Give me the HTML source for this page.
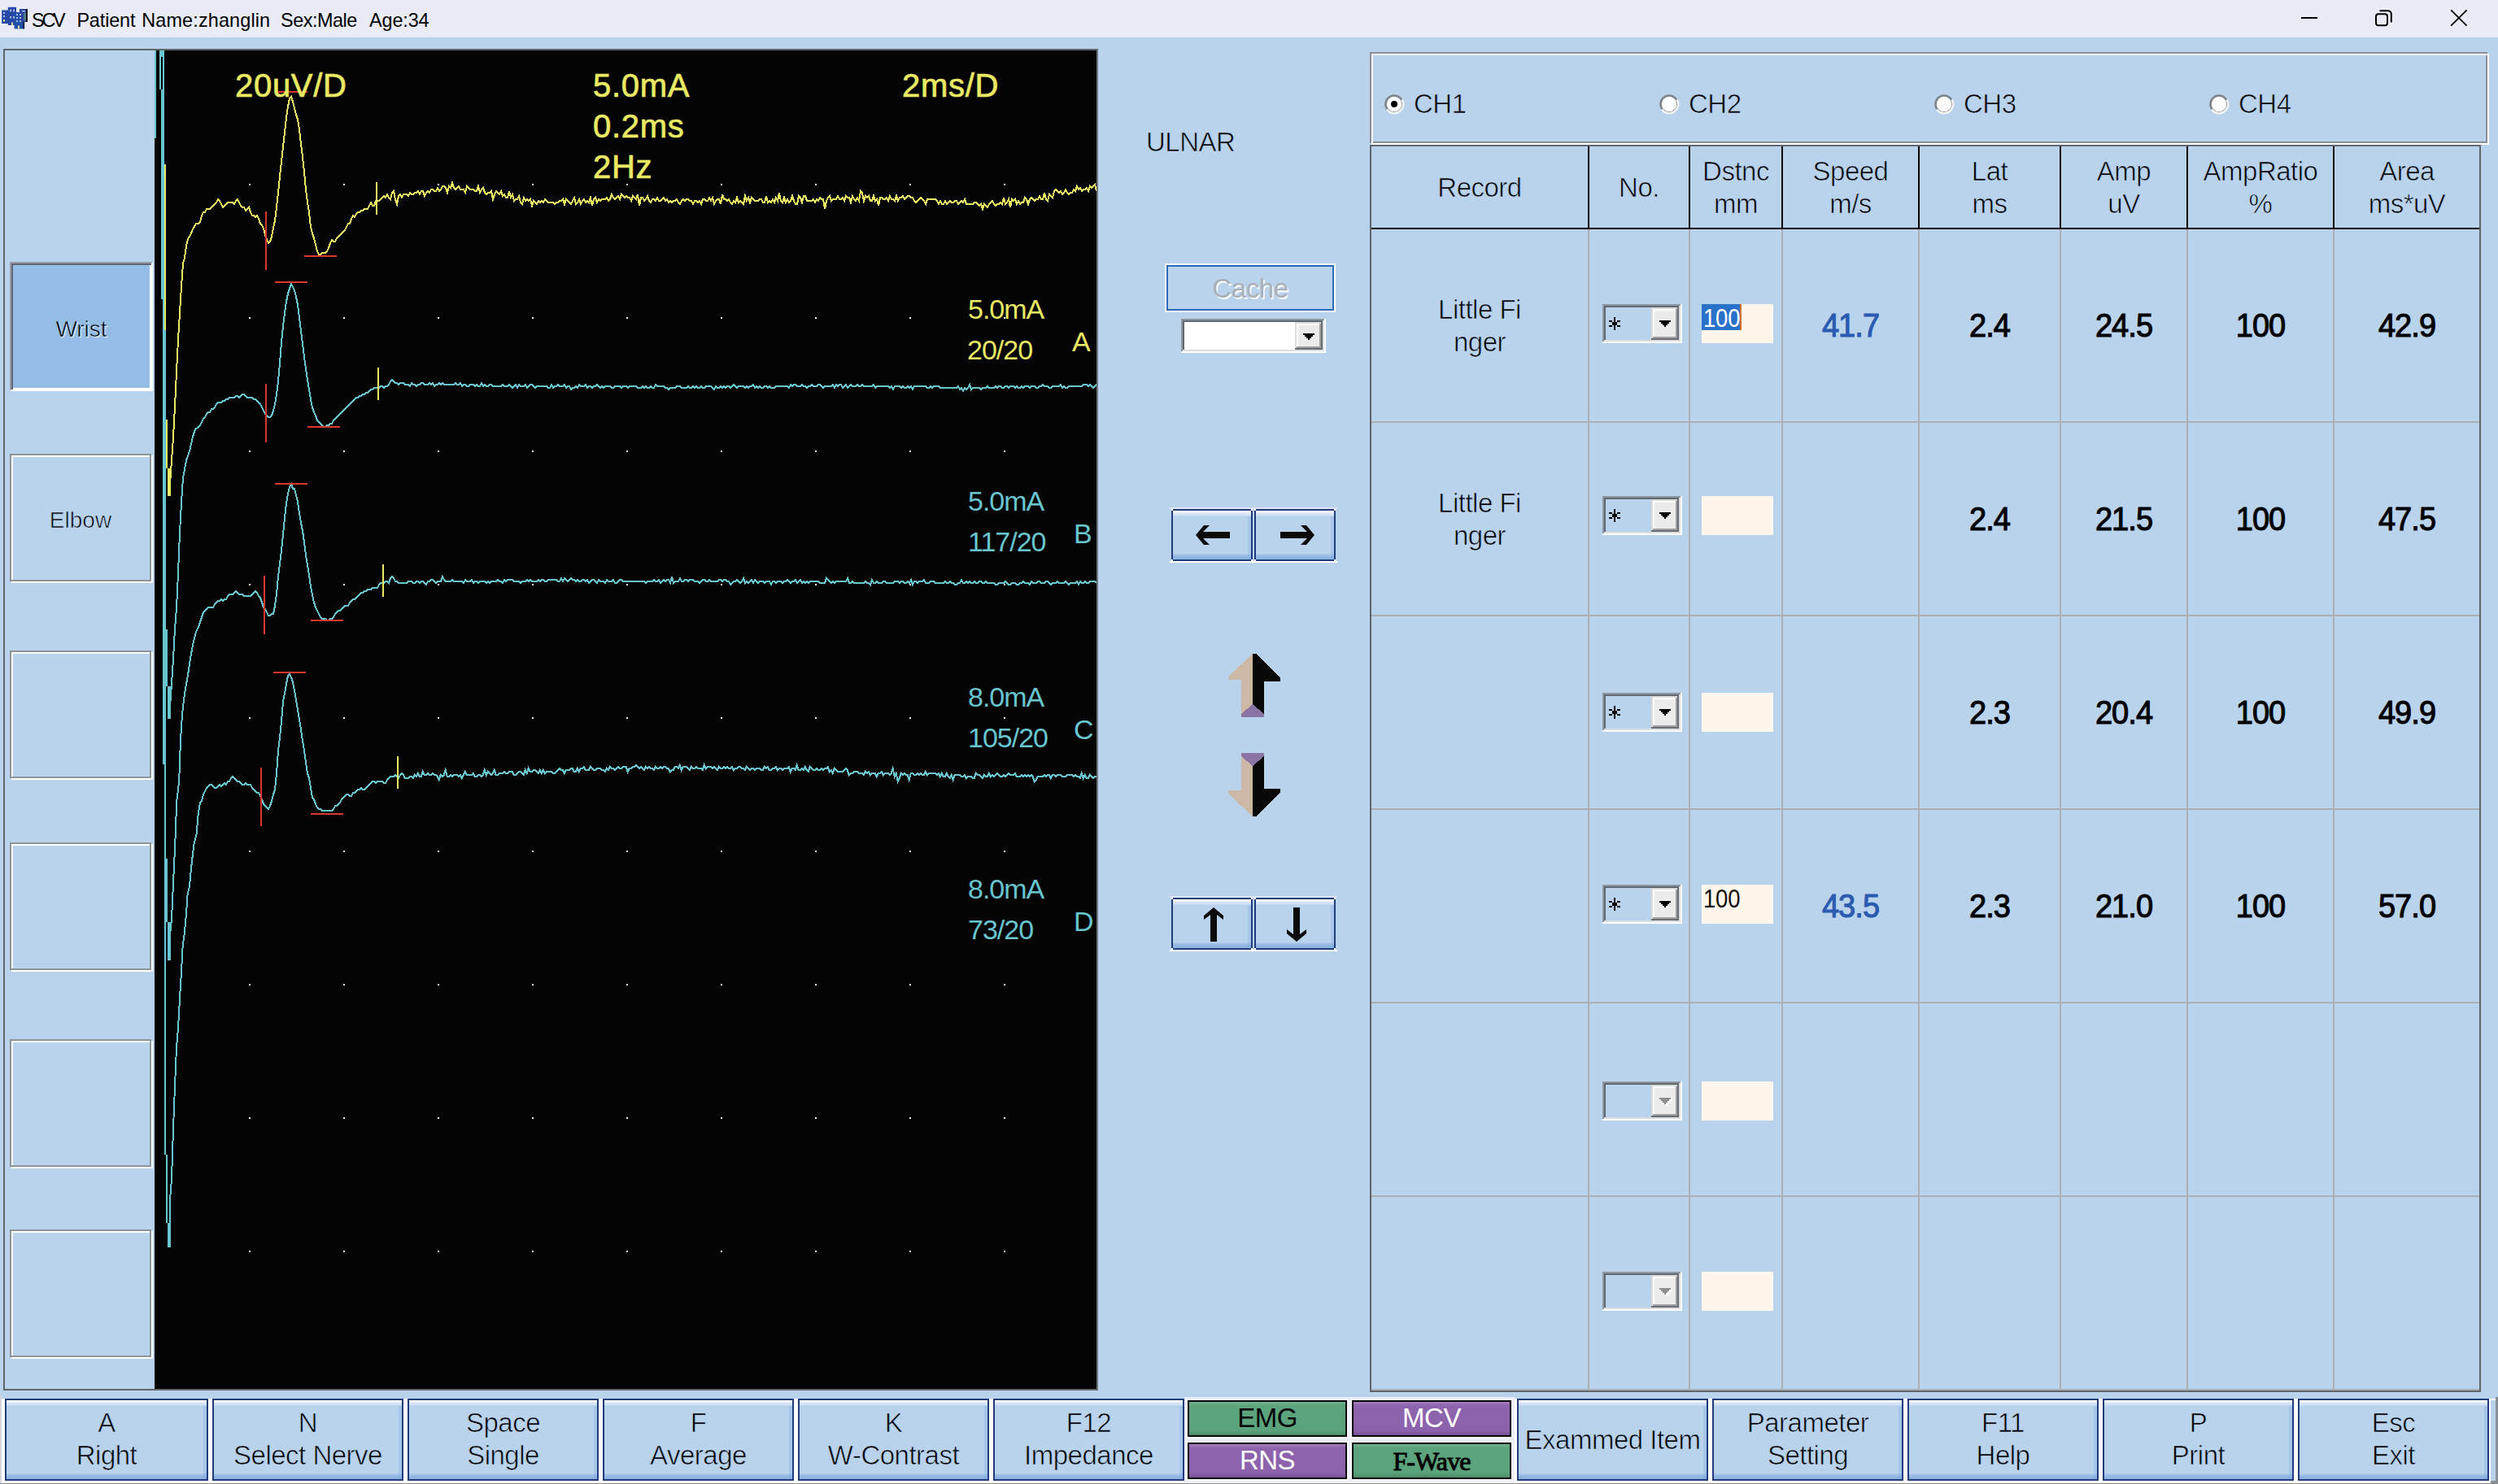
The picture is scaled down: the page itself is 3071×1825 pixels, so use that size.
<!DOCTYPE html>
<html><head><meta charset="utf-8"><title>SCV</title><style>
*{margin:0;padding:0;box-sizing:border-box}
html,body{width:3071px;height:1825px;overflow:hidden}
body{background:#b9d3ec;font-family:"Liberation Sans",sans-serif;color:#000;position:relative;font-size:32px;-webkit-text-stroke:0.7px #b9d3ec}
.nostroke,.tt,.cb,svg text{-webkit-text-stroke:0}
.abs{position:absolute}
.tb{left:0;top:0;width:3071px;height:46px;background:#e9ecf7}
.tt{left:39px;top:11px;font-size:23.4px;line-height:28px;white-space:pre;letter-spacing:-0.12px}
.frame{left:4px;top:60px;width:1346px;height:1650px;border:2px solid #60666c;border-right-color:#70757b}
.scope{left:190px;top:62px;width:1158px;height:1646px;background:#040404}
.lb{left:12px;width:174px;height:157px;border:2px solid #8c9498;box-shadow:2px 2px 0 #fff,inset 2px 2px 0 #fff;font-size:28px;text-align:center;line-height:160px}
.lb.sel{background:#94bee5;width:176px;height:159px;border:2px solid;border-color:#9a9ca8 #fff #fff #9a9ca8;box-shadow:inset 2px 2px 0 #5c6674,inset -2px -2px 0 #fff;line-height:161px;text-shadow:1px 1px 0 #fff;-webkit-text-stroke:0.7px #94bee5}
.t32{font-size:33px;line-height:40px;white-space:nowrap;letter-spacing:-0.5px}
.ctr{text-align:center}
.xb{border:2px solid #203c7c;background:linear-gradient(to bottom,#fff 0,#fdfeff 2px,#dbe6f7 3px,#cfdff4 6px,#b9d3ec 7px,#b9d3ec calc(100% - 7px),#a4c3e8 calc(100% - 6px),#8db3e0 calc(100% - 2px),#8db3e0 100%);}
.xb:after{content:"";position:absolute;right:0;top:7px;bottom:0;width:4px;background:rgba(120,165,225,.3)}
.bb{top:1720px;height:101px;width:235px}
.bb .l{position:absolute;left:0;right:0;text-align:center;font-size:33px;line-height:40px;white-space:nowrap;letter-spacing:-0.5px}
.cb{border:2px solid #080808;box-shadow:0 0 0 2px #f4f6fb;font-size:33px;letter-spacing:-0.5px;text-align:center;line-height:40px;width:196px;height:45px}
.grn{background:linear-gradient(to bottom,#72b392 0,#5ba47e 5px,#5aa37d calc(100% - 6px),#4a8d69 100%)}
.pur{background:linear-gradient(to bottom,#a57fc0 0,#8e63ae 5px,#8d62ad calc(100% - 6px),#77509a 100%)}
.hl{background:#abaeb3;height:2px}
.vl{background:#abaeb3;width:2px}
.hd{font-size:33px;line-height:40px;text-align:center;white-space:nowrap;letter-spacing:-0.5px}
.val{font-size:40px;font-weight:normal;-webkit-text-stroke:1.1px currentColor;line-height:46px;text-align:center;white-space:nowrap;letter-spacing:-1px;transform:scaleX(.95)}
.combo{width:98px;height:48px;border:2px solid;border-color:#81878e #fff #fff #81878e;box-shadow:inset 2px 2px 0 #70767d, inset -1px -1px 0 #e6ecf4}
.dd{width:34px;height:40px;background:#ebebeb;border:2px solid;border-color:#fff #7d8389 #7d8389 #fff}
.edit{width:88px;height:48px;background:#fef6ea}
</style></head><body>
<div class="abs tb"></div>
<svg class="abs" style="left:0;top:6px" width="38" height="32" viewBox="0 6 38 32">
<rect x="2.2" y="12.5" width="8" height="16.5" fill="#2a4aa8"/>
<rect x="9.8" y="8.8" width="10.2" height="22.2" fill="#2547a8"/>
<rect x="17.6" y="15" width="12.4" height="20.4" fill="#2050a8"/>
<rect x="24" y="11" width="8.4" height="16" fill="#2b44a0"/>
<rect x="32" y="11" width="1.9" height="16" fill="#0a0a14"/>
<rect x="28" y="27" width="2.2" height="8.4" fill="#14224e"/>
<g fill="#a9b6e2"><rect x="4" y="15" width="2" height="2"/><rect x="4" y="19" width="2" height="2"/>
<rect x="12" y="11.5" width="2" height="3"/><rect x="16" y="11.5" width="2" height="3"/><rect x="12" y="20" width="2" height="2.5"/><rect x="16" y="20" width="2" height="2.5"/>
<rect x="20" y="17" width="2" height="2"/><rect x="24" y="17" width="2" height="2"/><rect x="20" y="21" width="2" height="2"/><rect x="24" y="21" width="2" height="2"/><rect x="20" y="25" width="2" height="2"/><rect x="24" y="25" width="2" height="2"/>
<rect x="27" y="13" width="4" height="1.5"/></g>
<g fill="#d8d890"><rect x="4" y="24" width="2" height="2.5"/><rect x="14" y="27.5" width="2" height="3.5"/><rect x="22" y="31.5" width="2" height="3.5"/></g>
<rect x="29" y="16" width="3" height="9" fill="#4a7a88"/>
</svg>
<div class="abs tt"><span style="letter-spacing:-3.2px">SC</span>V<span style="letter-spacing:0.4px">  </span>Patient<span style="letter-spacing:1.3px"> </span><span style="letter-spacing:0.16px">Name:zhanglin</span>  <span style="letter-spacing:-0.46px">Sex:Male</span><span style="letter-spacing:1.1px">  </span>Age:34</div>
<svg class="abs" style="left:2800px;top:0" width="271" height="46" viewBox="2800 0 271 46" fill="none" stroke="#000" stroke-width="2">
<line x1="2829" y1="22" x2="2849" y2="22"/>
<rect x="2921" y="17.3" width="14" height="14" rx="3"/>
<path d="M2925.5 13.2 H2935.8 a4 4 0 0 1 4 4 V27.5"/>
<path d="M3013.2 12.4 L3032.6 31.6 M3032.6 12.4 L3013.2 31.6" stroke-width="1.8"/>
</svg>
<div class="abs frame"></div>
<div class="abs scope"></div>
<div class="abs lb sel" style="top:322px">Wrist</div>
<div class="abs lb" style="top:558px">Elbow</div>
<div class="abs lb" style="top:800px"></div>
<div class="abs lb" style="top:1036px"></div>
<div class="abs lb" style="top:1278px"></div>
<div class="abs lb" style="top:1512px"></div>
<svg class="abs" style="left:190px;top:62px" width="1158" height="1646" viewBox="190 62 1158 1646"><g fill="#f2f2f2" shape-rendering="crispEdges"><rect x="306.0" y="226.0" width="2" height="2"/><rect x="306.0" y="390.0" width="2" height="2"/><rect x="306.0" y="554.0" width="2" height="2"/><rect x="306.0" y="718.0" width="2" height="2"/><rect x="306.0" y="882.0" width="2" height="2"/><rect x="306.0" y="1046.0" width="2" height="2"/><rect x="306.0" y="1210.0" width="2" height="2"/><rect x="306.0" y="1374.0" width="2" height="2"/><rect x="306.0" y="1538.0" width="2" height="2"/><rect x="422.0" y="226.0" width="2" height="2"/><rect x="422.0" y="390.0" width="2" height="2"/><rect x="422.0" y="554.0" width="2" height="2"/><rect x="422.0" y="718.0" width="2" height="2"/><rect x="422.0" y="882.0" width="2" height="2"/><rect x="422.0" y="1046.0" width="2" height="2"/><rect x="422.0" y="1210.0" width="2" height="2"/><rect x="422.0" y="1374.0" width="2" height="2"/><rect x="422.0" y="1538.0" width="2" height="2"/><rect x="538.0" y="226.0" width="2" height="2"/><rect x="538.0" y="390.0" width="2" height="2"/><rect x="538.0" y="554.0" width="2" height="2"/><rect x="538.0" y="718.0" width="2" height="2"/><rect x="538.0" y="882.0" width="2" height="2"/><rect x="538.0" y="1046.0" width="2" height="2"/><rect x="538.0" y="1210.0" width="2" height="2"/><rect x="538.0" y="1374.0" width="2" height="2"/><rect x="538.0" y="1538.0" width="2" height="2"/><rect x="654.0" y="226.0" width="2" height="2"/><rect x="654.0" y="390.0" width="2" height="2"/><rect x="654.0" y="554.0" width="2" height="2"/><rect x="654.0" y="718.0" width="2" height="2"/><rect x="654.0" y="882.0" width="2" height="2"/><rect x="654.0" y="1046.0" width="2" height="2"/><rect x="654.0" y="1210.0" width="2" height="2"/><rect x="654.0" y="1374.0" width="2" height="2"/><rect x="654.0" y="1538.0" width="2" height="2"/><rect x="770.0" y="226.0" width="2" height="2"/><rect x="770.0" y="390.0" width="2" height="2"/><rect x="770.0" y="554.0" width="2" height="2"/><rect x="770.0" y="718.0" width="2" height="2"/><rect x="770.0" y="882.0" width="2" height="2"/><rect x="770.0" y="1046.0" width="2" height="2"/><rect x="770.0" y="1210.0" width="2" height="2"/><rect x="770.0" y="1374.0" width="2" height="2"/><rect x="770.0" y="1538.0" width="2" height="2"/><rect x="886.0" y="226.0" width="2" height="2"/><rect x="886.0" y="390.0" width="2" height="2"/><rect x="886.0" y="554.0" width="2" height="2"/><rect x="886.0" y="718.0" width="2" height="2"/><rect x="886.0" y="882.0" width="2" height="2"/><rect x="886.0" y="1046.0" width="2" height="2"/><rect x="886.0" y="1210.0" width="2" height="2"/><rect x="886.0" y="1374.0" width="2" height="2"/><rect x="886.0" y="1538.0" width="2" height="2"/><rect x="1002.0" y="226.0" width="2" height="2"/><rect x="1002.0" y="390.0" width="2" height="2"/><rect x="1002.0" y="554.0" width="2" height="2"/><rect x="1002.0" y="718.0" width="2" height="2"/><rect x="1002.0" y="882.0" width="2" height="2"/><rect x="1002.0" y="1046.0" width="2" height="2"/><rect x="1002.0" y="1210.0" width="2" height="2"/><rect x="1002.0" y="1374.0" width="2" height="2"/><rect x="1002.0" y="1538.0" width="2" height="2"/><rect x="1118.0" y="226.0" width="2" height="2"/><rect x="1118.0" y="390.0" width="2" height="2"/><rect x="1118.0" y="554.0" width="2" height="2"/><rect x="1118.0" y="718.0" width="2" height="2"/><rect x="1118.0" y="882.0" width="2" height="2"/><rect x="1118.0" y="1046.0" width="2" height="2"/><rect x="1118.0" y="1210.0" width="2" height="2"/><rect x="1118.0" y="1374.0" width="2" height="2"/><rect x="1118.0" y="1538.0" width="2" height="2"/><rect x="1234.0" y="226.0" width="2" height="2"/><rect x="1234.0" y="390.0" width="2" height="2"/><rect x="1234.0" y="554.0" width="2" height="2"/><rect x="1234.0" y="718.0" width="2" height="2"/><rect x="1234.0" y="882.0" width="2" height="2"/><rect x="1234.0" y="1046.0" width="2" height="2"/><rect x="1234.0" y="1210.0" width="2" height="2"/><rect x="1234.0" y="1374.0" width="2" height="2"/><rect x="1234.0" y="1538.0" width="2" height="2"/></g><g fill="#68c6d0" shape-rendering="crispEdges"><rect x="190" y="62" width="2" height="108"/><rect x="196" y="62" width="6" height="8"/><rect x="196" y="70" width="2" height="40"/><rect x="200" y="70" width="2" height="40"/><rect x="198" y="110" width="4" height="258"/><rect x="200" y="368" width="2" height="38"/><rect x="200" y="406" width="4" height="534"/><rect x="204" y="774" width="2" height="70"/><rect x="202" y="940" width="2" height="116"/><rect x="202" y="1056" width="4" height="78"/><rect x="202" y="1134" width="2" height="286"/><rect x="204" y="1420" width="2" height="84"/><rect x="206" y="1504" width="4" height="30"/><rect x="206" y="844" width="4" height="40"/><rect x="206" y="1134" width="4" height="47"/></g><g fill="#e9e964" shape-rendering="crispEdges"><rect x="202" y="202" width="2" height="204"/><rect x="204" y="516" width="2" height="60"/><rect x="206" y="576" width="4" height="34"/></g><g fill="none" stroke-width="2" stroke-linejoin="miter" shape-rendering="crispEdges"><polyline stroke="#68c6d0" points="208.0,1534.0 209.0,1476.0 211.0,1450.0 213.0,1388.0 215.0,1336.0 217.0,1288.0 219.0,1264.0 221.0,1228.0 223.0,1195.0 224.7,1163.0 227.0,1146.0 229.0,1124.0 230.6,1100.0 233.0,1090.0 234.8,1070.0 236.8,1052.0 238.7,1037.0 241.7,1025.0 243.6,1002.0 244.0,999.0 246.0,987.0 248.0,985.0 250.0,977.0 252.0,973.0 254.0,969.0 256.0,967.0 258.0,965.0 260.0,965.0 262.0,967.0 264.0,969.0 266.0,969.0 268.0,967.0 270.0,965.0 272.0,967.0 274.0,965.0 276.0,963.0 278.0,965.0 280.0,961.0 282.0,961.0 284.0,957.0 286.0,955.0 288.0,957.0 290.0,959.0 292.0,961.0 294.0,961.0 296.0,963.0 298.0,965.0 300.0,965.0 302.0,963.0 304.0,965.0 306.0,965.0 308.0,965.0 310.0,969.0 312.0,971.0 314.0,973.0 316.0,975.0 318.0,975.0 320.0,979.0 322.0,983.0 324.0,989.0 326.0,991.0 328.0,993.0 330.0,995.0 332.0,991.0 334.0,985.0 336.0,977.0 338.0,971.0 340.0,951.0 342.0,923.0 344.0,907.0 346.0,887.0 348.0,863.0 350.0,853.0 352.0,841.0 354.0,831.0 356.0,829.0 358.0,833.0 360.0,839.0 362.0,849.0 364.0,861.0 366.0,873.0 368.0,885.0 370.0,897.0 372.0,911.0 374.0,923.0 376.0,937.0 378.0,951.0 380.0,957.0 382.0,969.0 384.0,981.0 386.0,983.0 388.0,989.0 390.0,993.0 392.0,995.0 394.0,995.0 396.0,997.0 398.0,997.0 400.0,997.0 402.0,997.0 404.0,997.0 406.0,997.0 408.0,997.0 410.0,995.0 412.0,991.0 414.0,991.0 416.0,989.0 418.0,987.0 420.0,983.0 422.0,981.0 424.0,979.0 426.0,977.0 428.0,977.0 430.0,979.0 432.0,979.0 434.0,975.0 436.0,975.0 438.0,973.0 440.0,971.0 442.0,971.0 444.0,969.0 446.0,971.0 448.0,971.0 450.0,969.0 452.0,967.0 454.0,965.0 456.0,963.0 458.0,961.0 460.0,961.0 462.0,963.0 464.0,961.0 466.0,961.0 468.0,961.0 470.0,961.0 472.0,963.0 474.0,963.0 476.0,959.0 478.0,957.0 480.0,955.0 482.0,955.0 484.0,955.0 486.0,953.0 488.0,955.0 490.0,957.0 492.0,953.0 494.0,951.0 496.0,953.0 497.7,957.0 499.7,957.0 501.7,957.0 503.7,955.0 505.7,955.0 507.7,957.0 509.7,953.0 511.7,955.0 513.7,951.0 515.7,955.0 517.7,955.0 519.7,949.0 521.7,953.0 523.7,953.0 525.7,951.0 527.7,953.0 529.7,953.0 531.7,951.0 533.7,953.0 535.7,953.0 537.7,955.0 539.7,959.0 541.7,953.0 543.7,955.0 545.7,953.0 547.7,947.0 549.7,955.0 551.7,955.0 553.7,953.0 555.7,955.0 557.7,953.0 559.7,953.0 561.7,953.0 563.7,955.0 565.7,953.0 567.7,957.0 569.7,953.0 571.7,949.0 573.7,953.0 575.7,953.0 577.7,953.0 579.7,953.0 581.7,951.0 583.7,955.0 585.7,955.0 587.7,953.0 589.7,953.0 591.7,955.0 593.7,953.0 595.7,947.0 597.7,953.0 599.7,949.0 601.7,951.0 603.7,953.0 605.7,951.0 607.7,947.0 609.7,953.0 611.7,953.0 613.7,951.0 615.7,951.0 617.7,951.0 619.7,949.0 621.7,951.0 623.7,951.0 625.7,949.0 627.7,949.0 629.7,949.0 631.7,953.0 633.7,953.0 635.7,951.0 637.7,949.0 639.7,949.0 641.7,951.0 643.7,953.0 645.7,947.0 647.7,951.0 649.7,945.0 651.7,949.0 653.7,949.0 655.7,947.0 657.7,947.0 659.7,949.0 661.7,951.0 663.7,947.0 665.7,951.0 667.7,947.0 669.7,951.0 671.7,949.0 673.7,949.0 675.7,949.0 677.7,949.0 679.7,951.0 681.7,951.0 683.7,949.0 685.7,947.0 687.7,945.0 689.7,947.0 691.7,947.0 693.7,951.0 695.7,947.0 697.7,947.0 699.7,947.0 701.7,945.0 703.7,945.0 705.7,949.0 707.7,949.0 709.7,945.0 711.7,949.0 713.7,945.0 715.7,945.0 717.7,943.0 719.7,947.0 721.7,947.0 723.7,947.0 725.7,943.0 727.7,945.0 729.7,947.0 731.7,947.0 733.7,945.0 735.7,945.0 737.7,945.0 739.7,947.0 741.7,947.0 743.7,949.0 745.7,945.0 747.7,947.0 749.7,943.0 751.7,945.0 753.7,945.0 755.7,947.0 757.7,945.0 759.7,943.0 761.7,945.0 763.7,945.0 765.7,943.0 767.7,943.0 769.7,943.0 771.7,949.0 773.7,945.0 775.7,945.0 777.7,943.0 779.7,943.0 781.7,941.0 783.7,943.0 785.7,945.0 787.7,943.0 789.7,945.0 791.7,947.0 793.7,943.0 795.7,945.0 797.7,943.0 799.7,945.0 801.7,945.0 803.7,947.0 805.7,943.0 807.7,945.0 809.7,945.0 811.7,943.0 813.7,945.0 815.7,943.0 817.7,943.0 819.7,945.0 821.7,945.0 823.7,949.0 825.7,947.0 827.7,947.0 829.7,943.0 831.7,943.0 833.7,945.0 835.7,941.0 837.7,947.0 839.7,943.0 841.7,943.0 843.7,943.0 845.7,945.0 847.7,947.0 849.7,943.0 851.7,945.0 853.7,945.0 855.7,943.0 857.7,945.0 859.7,945.0 861.7,945.0 863.7,947.0 865.7,941.0 867.7,945.0 869.7,943.0 871.7,943.0 873.7,943.0 875.7,945.0 877.7,943.0 879.7,945.0 881.7,947.0 883.7,943.0 885.7,945.0 887.7,945.0 889.7,943.0 891.7,945.0 893.7,943.0 895.7,945.0 897.7,945.0 899.7,943.0 901.7,947.0 903.7,945.0 905.7,945.0 907.7,943.0 909.7,943.0 911.7,945.0 913.7,945.0 915.7,947.0 917.7,943.0 919.7,945.0 921.7,947.0 923.7,945.0 925.7,945.0 927.7,947.0 929.7,945.0 931.7,945.0 933.7,945.0 935.7,947.0 937.7,947.0 939.7,943.0 941.7,945.0 943.7,943.0 945.7,947.0 947.7,947.0 949.7,945.0 951.7,945.0 953.7,943.0 955.7,947.0 957.7,945.0 959.7,945.0 961.7,947.0 963.7,945.0 965.7,945.0 967.7,945.0 969.7,943.0 971.7,949.0 973.7,945.0 975.7,945.0 977.7,947.0 979.7,941.0 981.7,947.0 983.7,947.0 985.7,945.0 987.7,947.0 989.7,943.0 991.7,947.0 993.7,949.0 995.7,943.0 997.7,945.0 999.7,947.0 1001.7,947.0 1003.7,945.0 1005.7,947.0 1007.7,947.0 1009.7,945.0 1011.7,947.0 1013.7,945.0 1015.7,945.0 1017.7,943.0 1019.7,949.0 1021.7,947.0 1023.7,951.0 1025.7,945.0 1027.7,947.0 1029.7,949.0 1031.7,949.0 1033.7,949.0 1035.7,949.0 1037.7,947.0 1039.7,945.0 1041.7,947.0 1043.7,953.0 1045.7,951.0 1047.7,951.0 1049.7,949.0 1051.7,949.0 1053.7,949.0 1055.7,951.0 1057.7,951.0 1059.7,951.0 1061.7,953.0 1063.7,949.0 1065.7,951.0 1067.7,949.0 1069.7,953.0 1071.7,951.0 1073.7,951.0 1075.7,951.0 1077.7,955.0 1079.7,951.0 1081.7,951.0 1083.7,949.0 1085.7,953.0 1087.7,951.0 1089.7,951.0 1091.7,951.0 1093.7,953.0 1095.7,951.0 1097.7,945.0 1099.7,955.0 1101.7,951.0 1103.7,961.0 1105.7,957.0 1107.7,951.0 1109.7,953.0 1111.7,951.0 1113.7,953.0 1115.7,953.0 1117.7,959.0 1119.7,951.0 1121.7,951.0 1123.7,953.0 1125.7,953.0 1127.7,951.0 1129.7,953.0 1131.7,951.0 1133.7,953.0 1135.7,953.0 1137.7,949.0 1139.7,953.0 1141.7,951.0 1143.7,951.0 1145.7,951.0 1147.7,951.0 1149.7,951.0 1151.7,953.0 1153.7,951.0 1155.7,955.0 1157.7,951.0 1159.7,955.0 1161.7,955.0 1163.7,951.0 1165.7,955.0 1167.7,957.0 1169.7,953.0 1171.7,959.0 1173.7,953.0 1175.7,953.0 1177.7,953.0 1179.7,953.0 1181.7,955.0 1183.7,955.0 1185.7,953.0 1187.7,957.0 1189.7,955.0 1191.7,955.0 1193.7,955.0 1195.7,957.0 1197.7,957.0 1199.7,951.0 1201.7,953.0 1203.7,953.0 1205.7,955.0 1207.7,957.0 1209.7,953.0 1211.7,955.0 1213.7,955.0 1215.7,951.0 1217.7,955.0 1219.7,953.0 1221.7,955.0 1223.7,953.0 1225.7,951.0 1227.7,953.0 1229.7,955.0 1231.7,955.0 1233.7,953.0 1235.7,955.0 1237.7,953.0 1239.7,951.0 1241.7,953.0 1243.7,953.0 1245.7,953.0 1247.7,951.0 1249.7,955.0 1251.7,955.0 1253.7,955.0 1255.7,953.0 1257.7,955.0 1259.7,953.0 1261.7,955.0 1263.7,953.0 1265.7,955.0 1267.7,953.0 1269.7,955.0 1271.7,961.0 1273.7,959.0 1275.7,955.0 1277.7,955.0 1279.7,955.0 1281.7,955.0 1283.7,953.0 1285.7,955.0 1287.7,953.0 1289.7,953.0 1291.7,957.0 1293.7,953.0 1295.7,953.0 1297.7,955.0 1299.7,953.0 1301.7,953.0 1303.7,953.0 1305.7,955.0 1307.7,955.0 1309.7,955.0 1311.7,953.0 1313.7,953.0 1315.7,953.0 1317.7,953.0 1319.7,955.0 1321.7,953.0 1323.7,955.0 1325.7,955.0 1327.7,957.0 1329.7,951.0 1331.7,957.0 1333.7,953.0 1335.7,957.0 1337.7,957.0 1339.7,953.0 1341.7,955.0 1343.7,957.0 1345.7,955.0 1347.7,955.0"/><polyline stroke="#68c6d0" points="208.0,1181.0 209.0,1150.0 211.0,1130.0 212.4,1100.0 213.3,1080.0 215.3,1037.0 217.2,986.0 220.2,960.0 222.0,910.0 224.0,878.0 227.0,853.0 231.0,830.0 234.0,810.0 237.0,793.0 240.7,778.0 244.0,771.0 246.0,765.0 248.0,759.0 250.0,753.0 252.0,751.0 254.0,749.0 256.0,747.0 258.0,747.0 260.0,747.0 262.0,747.0 264.0,743.0 266.0,741.0 268.0,739.0 270.0,739.0 272.0,737.0 274.0,739.0 276.0,737.0 278.0,737.0 280.0,733.0 282.0,731.0 284.0,731.0 286.0,731.0 288.0,729.0 290.0,727.0 292.0,729.0 294.0,731.0 296.0,731.0 298.0,731.0 300.0,733.0 302.0,733.0 304.0,733.0 306.0,733.0 308.0,733.0 310.0,731.0 312.0,729.0 314.0,727.0 316.0,729.0 318.0,733.0 320.0,735.0 322.0,741.0 324.0,747.0 326.0,749.0 328.0,753.0 330.0,757.0 332.0,757.0 334.0,755.0 336.0,755.0 338.0,745.0 340.0,731.0 342.0,709.0 344.0,693.0 346.0,677.0 348.0,657.0 350.0,637.0 352.0,619.0 354.0,607.0 356.0,599.0 358.0,595.0 360.0,601.0 362.0,601.0 364.0,609.0 366.0,617.0 368.0,631.0 370.0,643.0 372.0,653.0 374.0,667.0 376.0,683.0 378.0,695.0 380.0,707.0 382.0,721.0 384.0,731.0 386.0,741.0 388.0,747.0 390.0,751.0 392.0,755.0 394.0,759.0 396.0,761.0 398.0,761.0 400.0,761.0 402.0,763.0 404.0,763.0 406.0,761.0 408.0,761.0 410.0,759.0 412.0,755.0 414.0,753.0 416.0,751.0 418.0,751.0 420.0,749.0 422.0,747.0 424.0,745.0 426.0,745.0 428.0,745.0 430.0,741.0 432.0,739.0 434.0,737.0 436.0,737.0 438.0,735.0 440.0,733.0 442.0,731.0 444.0,729.0 446.0,729.0 448.0,727.0 450.0,727.0 452.0,725.0 454.0,725.0 456.0,725.0 458.0,723.0 460.0,723.0 462.0,723.0 464.0,723.0 466.0,719.0 468.0,717.0 470.0,717.0 472.0,717.0 474.0,715.0 476.0,715.0 478.0,717.0 480.0,711.0 482.0,709.0 484.0,711.0 486.0,715.0 488.0,715.0 490.0,717.0 492.0,717.0 494.0,717.0 496.0,717.0 498.0,717.0 500.0,717.0 502.0,715.0 504.0,715.0 506.0,715.0 508.0,717.0 510.0,717.0 512.0,715.0 514.0,715.0 516.0,717.0 518.0,715.0 520.0,715.0 522.0,717.0 524.0,719.0 526.0,715.0 528.0,715.0 530.0,713.0 532.0,713.0 534.0,715.0 536.0,717.0 538.0,715.0 540.0,715.0 542.0,715.0 544.0,709.0 546.0,713.0 548.0,715.0 550.0,715.0 552.0,715.0 554.0,715.0 556.0,713.0 558.0,715.0 560.0,715.0 562.0,715.0 564.0,715.0 566.0,715.0 568.0,715.0 570.0,717.0 572.0,713.0 574.0,715.0 576.0,715.0 578.0,715.0 580.0,713.0 582.0,717.0 584.0,715.0 586.0,715.0 588.0,717.0 590.0,715.0 592.0,715.0 594.0,715.0 596.0,715.0 598.0,717.0 600.0,715.0 602.0,717.0 604.0,715.0 606.0,715.0 608.0,715.0 610.0,715.0 612.0,713.0 614.0,715.0 616.0,715.0 618.0,717.0 620.0,713.0 622.0,715.0 624.0,713.0 626.0,713.0 628.0,713.0 630.0,713.0 632.0,715.0 634.0,715.0 636.0,715.0 638.0,715.0 640.0,717.0 642.0,715.0 644.0,715.0 646.0,715.0 648.0,713.0 650.0,715.0 652.0,713.0 654.0,715.0 656.0,715.0 658.0,715.0 660.0,715.0 662.0,713.0 664.0,715.0 666.0,713.0 668.0,713.0 670.0,715.0 672.0,715.0 674.0,713.0 676.0,713.0 678.0,713.0 680.0,713.0 682.0,713.0 684.0,713.0 686.0,715.0 688.0,715.0 690.0,711.0 692.0,715.0 694.0,711.0 696.0,713.0 698.0,715.0 700.0,713.0 702.0,711.0 704.0,713.0 706.0,713.0 708.0,715.0 710.0,713.0 712.0,715.0 714.0,715.0 716.0,713.0 718.0,713.0 720.0,715.0 722.0,713.0 724.0,717.0 726.0,715.0 728.0,713.0 730.0,713.0 732.0,715.0 734.0,717.0 736.0,713.0 738.0,715.0 740.0,715.0 742.0,715.0 744.0,717.0 746.0,713.0 748.0,715.0 750.0,715.0 752.0,715.0 754.0,713.0 756.0,717.0 758.0,717.0 760.0,715.0 762.0,713.0 764.0,713.0 766.0,715.0 768.0,715.0 770.0,715.0 772.0,715.0 774.0,715.0 776.0,715.0 778.0,715.0 780.0,715.0 782.0,715.0 784.0,715.0 786.0,715.0 788.0,715.0 790.0,715.0 792.0,715.0 794.0,717.0 796.0,715.0 798.0,715.0 800.0,715.0 802.0,715.0 804.0,713.0 806.0,715.0 808.0,715.0 810.0,713.0 812.0,717.0 814.0,715.0 816.0,713.0 818.0,715.0 820.0,713.0 822.0,713.0 824.0,717.0 826.0,709.0 828.0,717.0 830.0,715.0 832.0,715.0 834.0,715.0 836.0,711.0 838.0,715.0 840.0,715.0 842.0,713.0 844.0,713.0 846.0,715.0 848.0,713.0 850.0,713.0 852.0,713.0 854.0,715.0 856.0,715.0 858.0,715.0 860.0,717.0 862.0,715.0 864.0,713.0 866.0,713.0 868.0,715.0 870.0,715.0 872.0,713.0 874.0,715.0 876.0,715.0 878.0,715.0 880.0,715.0 882.0,715.0 884.0,713.0 886.0,713.0 888.0,715.0 890.0,713.0 892.0,713.0 894.0,715.0 896.0,715.0 898.0,719.0 900.0,717.0 902.0,715.0 904.0,715.0 906.0,713.0 908.0,715.0 910.0,717.0 912.0,715.0 914.0,711.0 916.0,717.0 918.0,715.0 920.0,717.0 922.0,715.0 924.0,713.0 926.0,717.0 928.0,713.0 930.0,715.0 932.0,717.0 934.0,715.0 936.0,715.0 938.0,715.0 940.0,717.0 942.0,715.0 944.0,715.0 946.0,715.0 948.0,719.0 950.0,715.0 952.0,715.0 954.0,717.0 956.0,715.0 958.0,715.0 960.0,715.0 962.0,717.0 964.0,715.0 966.0,715.0 968.0,713.0 970.0,715.0 972.0,717.0 974.0,715.0 976.0,715.0 978.0,713.0 980.0,717.0 982.0,715.0 984.0,713.0 986.0,717.0 988.0,715.0 990.0,717.0 992.0,715.0 994.0,717.0 996.0,715.0 998.0,715.0 1000.0,715.0 1002.0,715.0 1004.0,715.0 1006.0,715.0 1008.0,717.0 1010.0,717.0 1012.0,717.0 1014.0,717.0 1016.0,711.0 1018.0,713.0 1020.0,715.0 1022.0,717.0 1024.0,715.0 1026.0,717.0 1028.0,715.0 1030.0,715.0 1032.0,715.0 1034.0,715.0 1036.0,715.0 1038.0,715.0 1040.0,715.0 1042.0,711.0 1044.0,717.0 1046.0,717.0 1048.0,715.0 1050.0,717.0 1052.0,717.0 1054.0,717.0 1056.0,717.0 1058.0,717.0 1060.0,717.0 1062.0,717.0 1064.0,715.0 1066.0,717.0 1068.0,717.0 1070.0,719.0 1072.0,713.0 1074.0,717.0 1076.0,717.0 1078.0,715.0 1080.0,717.0 1082.0,717.0 1084.0,717.0 1086.0,715.0 1088.0,715.0 1090.0,717.0 1092.0,717.0 1094.0,717.0 1096.0,717.0 1098.0,717.0 1100.0,715.0 1102.0,715.0 1104.0,715.0 1106.0,717.0 1108.0,715.0 1110.0,715.0 1112.0,717.0 1114.0,717.0 1116.0,715.0 1118.0,717.0 1120.0,713.0 1122.0,719.0 1124.0,715.0 1126.0,715.0 1128.0,717.0 1130.0,715.0 1132.0,715.0 1134.0,715.0 1136.0,713.0 1138.0,717.0 1140.0,717.0 1142.0,717.0 1144.0,715.0 1146.0,715.0 1148.0,715.0 1150.0,717.0 1152.0,717.0 1154.0,717.0 1156.0,717.0 1158.0,717.0 1160.0,717.0 1162.0,715.0 1164.0,717.0 1166.0,717.0 1168.0,715.0 1170.0,717.0 1172.0,717.0 1174.0,719.0 1176.0,719.0 1178.0,717.0 1180.0,717.0 1182.0,713.0 1184.0,717.0 1186.0,717.0 1188.0,715.0 1190.0,717.0 1192.0,715.0 1194.0,717.0 1196.0,717.0 1198.0,715.0 1200.0,717.0 1202.0,717.0 1204.0,715.0 1206.0,715.0 1208.0,717.0 1210.0,717.0 1212.0,715.0 1214.0,717.0 1216.0,717.0 1218.0,717.0 1220.0,717.0 1222.0,717.0 1224.0,719.0 1226.0,719.0 1228.0,717.0 1230.0,717.0 1232.0,717.0 1234.0,717.0 1236.0,715.0 1238.0,717.0 1240.0,719.0 1242.0,719.0 1244.0,717.0 1246.0,717.0 1248.0,717.0 1250.0,719.0 1252.0,719.0 1254.0,717.0 1256.0,717.0 1258.0,715.0 1260.0,717.0 1262.0,717.0 1264.0,717.0 1266.0,719.0 1268.0,715.0 1270.0,717.0 1272.0,717.0 1274.0,717.0 1276.0,715.0 1278.0,715.0 1280.0,717.0 1282.0,717.0 1284.0,717.0 1286.0,715.0 1288.0,715.0 1290.0,717.0 1292.0,719.0 1294.0,717.0 1296.0,717.0 1298.0,717.0 1300.0,715.0 1302.0,717.0 1304.0,717.0 1306.0,717.0 1308.0,717.0 1310.0,715.0 1312.0,717.0 1314.0,719.0 1316.0,717.0 1318.0,717.0 1320.0,717.0 1322.0,717.0 1324.0,715.0 1326.0,719.0 1328.0,715.0 1330.0,717.0 1332.0,717.0 1334.0,715.0 1336.0,717.0 1338.0,717.0 1340.0,715.0 1342.0,715.0 1344.0,715.0 1346.0,715.0 1348.0,717.0"/><polyline stroke="#68c6d0" points="208.0,883.0 211.0,841.0 213.0,811.0 215.0,773.0 217.0,748.0 219.0,705.0 221.0,655.0 223.0,618.0 225.0,588.0 229.0,566.0 233.0,555.0 237.0,537.0 240.0,528.0 244.0,525.0 246.0,523.0 248.0,519.0 250.0,515.0 252.0,513.0 254.0,509.0 256.0,507.0 258.0,507.0 260.0,503.0 262.0,503.0 264.0,501.0 266.0,497.0 268.0,495.0 270.0,495.0 272.0,495.0 274.0,493.0 276.0,493.0 278.0,491.0 280.0,491.0 282.0,489.0 284.0,489.0 286.0,489.0 288.0,489.0 290.0,487.0 292.0,487.0 294.0,489.0 296.0,487.0 298.0,485.0 300.0,485.0 302.0,487.0 304.0,489.0 306.0,489.0 308.0,489.0 310.0,489.0 312.0,491.0 314.0,491.0 316.0,493.0 318.0,495.0 320.0,497.0 322.0,501.0 324.0,505.0 326.0,509.0 328.0,511.0 330.0,513.0 332.0,513.0 334.0,511.0 336.0,505.0 338.0,497.0 340.0,485.0 342.0,469.0 344.0,447.0 346.0,421.0 348.0,401.0 350.0,385.0 352.0,371.0 354.0,361.0 356.0,355.0 358.0,349.0 360.0,353.0 362.0,357.0 364.0,365.0 366.0,375.0 368.0,391.0 370.0,407.0 372.0,423.0 374.0,439.0 376.0,453.0 378.0,467.0 380.0,479.0 382.0,491.0 384.0,501.0 386.0,507.0 388.0,511.0 390.0,517.0 392.0,519.0 394.0,521.0 396.0,523.0 398.0,525.0 400.0,525.0 402.0,523.0 404.0,523.0 406.0,521.0 408.0,521.0 410.0,517.0 412.0,515.0 414.0,513.0 416.0,511.0 418.0,509.0 420.0,507.0 422.0,505.0 424.0,503.0 426.0,501.0 428.0,499.0 430.0,497.0 432.0,495.0 434.0,493.0 436.0,491.0 438.0,489.0 440.0,489.0 442.0,487.0 444.0,487.0 446.0,485.0 448.0,485.0 450.0,483.0 452.0,483.0 454.0,481.0 456.0,479.0 458.0,479.0 460.0,477.0 462.0,477.0 464.0,477.0 466.0,477.0 468.0,475.0 470.0,475.0 472.0,477.0 474.0,475.0 476.0,475.0 478.0,473.0 480.0,469.0 482.0,467.0 484.0,469.0 486.0,471.0 488.0,471.0 490.0,473.0 492.0,471.0 494.0,471.0 496.0,471.0 498.0,473.0 500.0,473.0 502.0,473.0 504.0,475.0 506.0,471.0 508.0,473.0 510.0,473.0 512.0,475.0 514.0,473.0 516.0,473.0 518.0,471.0 520.0,471.0 522.0,473.0 524.0,473.0 526.0,473.0 528.0,471.0 530.0,473.0 532.0,471.0 534.0,475.0 536.0,473.0 538.0,473.0 540.0,471.0 542.0,473.0 544.0,471.0 546.0,473.0 548.0,473.0 550.0,473.0 552.0,473.0 554.0,473.0 556.0,473.0 558.0,473.0 560.0,471.0 562.0,473.0 564.0,473.0 566.0,471.0 568.0,475.0 570.0,473.0 572.0,473.0 574.0,475.0 576.0,475.0 578.0,473.0 580.0,473.0 582.0,473.0 584.0,475.0 586.0,473.0 588.0,475.0 590.0,475.0 592.0,471.0 594.0,475.0 596.0,473.0 598.0,475.0 600.0,475.0 602.0,473.0 604.0,473.0 606.0,475.0 608.0,475.0 610.0,475.0 612.0,475.0 614.0,475.0 616.0,475.0 618.0,473.0 620.0,475.0 622.0,475.0 624.0,475.0 626.0,473.0 628.0,475.0 630.0,477.0 632.0,475.0 634.0,473.0 636.0,477.0 638.0,473.0 640.0,475.0 642.0,475.0 644.0,475.0 646.0,473.0 648.0,477.0 650.0,475.0 652.0,473.0 654.0,473.0 656.0,475.0 658.0,477.0 660.0,475.0 662.0,475.0 664.0,475.0 666.0,475.0 668.0,475.0 670.0,475.0 672.0,475.0 674.0,477.0 676.0,477.0 678.0,473.0 680.0,477.0 682.0,475.0 684.0,475.0 686.0,473.0 688.0,475.0 690.0,475.0 692.0,475.0 694.0,473.0 696.0,477.0 698.0,475.0 700.0,475.0 702.0,479.0 704.0,477.0 706.0,477.0 708.0,475.0 710.0,477.0 712.0,473.0 714.0,475.0 716.0,475.0 718.0,475.0 720.0,473.0 722.0,477.0 724.0,475.0 726.0,475.0 728.0,477.0 730.0,475.0 732.0,475.0 734.0,473.0 736.0,475.0 738.0,477.0 740.0,475.0 742.0,477.0 744.0,475.0 746.0,475.0 748.0,475.0 750.0,475.0 752.0,477.0 754.0,477.0 756.0,475.0 758.0,475.0 760.0,475.0 762.0,475.0 764.0,477.0 766.0,475.0 768.0,475.0 770.0,475.0 772.0,477.0 774.0,475.0 776.0,475.0 778.0,475.0 780.0,475.0 782.0,475.0 784.0,477.0 786.0,477.0 788.0,477.0 790.0,475.0 792.0,477.0 794.0,475.0 796.0,477.0 798.0,477.0 800.0,475.0 802.0,477.0 804.0,477.0 806.0,473.0 808.0,475.0 810.0,475.0 812.0,475.0 814.0,475.0 816.0,475.0 818.0,477.0 820.0,477.0 822.0,479.0 824.0,477.0 826.0,477.0 828.0,477.0 830.0,477.0 832.0,475.0 834.0,475.0 836.0,475.0 838.0,477.0 840.0,477.0 842.0,477.0 844.0,477.0 846.0,475.0 848.0,477.0 850.0,477.0 852.0,475.0 854.0,477.0 856.0,475.0 858.0,477.0 860.0,477.0 862.0,475.0 864.0,477.0 866.0,477.0 868.0,475.0 870.0,475.0 872.0,475.0 874.0,475.0 876.0,477.0 878.0,479.0 880.0,475.0 882.0,477.0 884.0,477.0 886.0,475.0 888.0,477.0 890.0,475.0 892.0,477.0 894.0,475.0 896.0,475.0 898.0,477.0 900.0,475.0 902.0,473.0 904.0,475.0 906.0,477.0 908.0,475.0 910.0,475.0 912.0,475.0 914.0,475.0 916.0,477.0 918.0,475.0 920.0,477.0 922.0,475.0 924.0,475.0 926.0,473.0 928.0,477.0 930.0,475.0 932.0,477.0 934.0,475.0 936.0,477.0 938.0,477.0 940.0,475.0 942.0,475.0 944.0,477.0 946.0,475.0 948.0,477.0 950.0,477.0 952.0,477.0 954.0,475.0 956.0,475.0 958.0,475.0 960.0,475.0 962.0,475.0 964.0,475.0 966.0,475.0 968.0,475.0 970.0,477.0 972.0,473.0 974.0,475.0 976.0,473.0 978.0,473.0 980.0,475.0 982.0,475.0 984.0,475.0 986.0,473.0 988.0,475.0 990.0,475.0 992.0,477.0 994.0,475.0 996.0,475.0 998.0,473.0 1000.0,475.0 1002.0,475.0 1004.0,475.0 1006.0,473.0 1008.0,473.0 1010.0,475.0 1012.0,477.0 1014.0,475.0 1016.0,475.0 1018.0,475.0 1020.0,475.0 1022.0,475.0 1024.0,473.0 1026.0,477.0 1028.0,473.0 1030.0,475.0 1032.0,473.0 1034.0,473.0 1036.0,477.0 1038.0,475.0 1040.0,473.0 1042.0,477.0 1044.0,475.0 1046.0,473.0 1048.0,475.0 1050.0,475.0 1052.0,475.0 1054.0,473.0 1056.0,475.0 1058.0,475.0 1060.0,473.0 1062.0,475.0 1064.0,475.0 1066.0,475.0 1068.0,475.0 1070.0,475.0 1072.0,475.0 1074.0,473.0 1076.0,477.0 1078.0,475.0 1080.0,475.0 1082.0,475.0 1084.0,475.0 1086.0,475.0 1088.0,475.0 1090.0,475.0 1092.0,475.0 1094.0,477.0 1096.0,475.0 1098.0,479.0 1100.0,475.0 1102.0,475.0 1104.0,475.0 1106.0,475.0 1108.0,477.0 1110.0,475.0 1112.0,477.0 1114.0,477.0 1116.0,475.0 1118.0,477.0 1120.0,475.0 1122.0,479.0 1124.0,475.0 1126.0,475.0 1128.0,475.0 1130.0,475.0 1132.0,475.0 1134.0,475.0 1136.0,475.0 1138.0,475.0 1140.0,477.0 1142.0,477.0 1144.0,475.0 1146.0,477.0 1148.0,475.0 1150.0,475.0 1152.0,475.0 1154.0,475.0 1156.0,477.0 1158.0,477.0 1160.0,477.0 1162.0,477.0 1164.0,477.0 1166.0,477.0 1168.0,477.0 1170.0,477.0 1172.0,477.0 1174.0,477.0 1176.0,477.0 1178.0,475.0 1180.0,479.0 1182.0,477.0 1184.0,481.0 1186.0,477.0 1188.0,479.0 1190.0,477.0 1192.0,473.0 1194.0,479.0 1196.0,477.0 1198.0,477.0 1200.0,477.0 1202.0,477.0 1204.0,477.0 1206.0,479.0 1208.0,477.0 1210.0,477.0 1212.0,477.0 1214.0,475.0 1216.0,477.0 1218.0,477.0 1220.0,477.0 1222.0,477.0 1224.0,475.0 1226.0,477.0 1228.0,475.0 1230.0,475.0 1232.0,477.0 1234.0,477.0 1236.0,475.0 1238.0,475.0 1240.0,477.0 1242.0,475.0 1244.0,475.0 1246.0,475.0 1248.0,477.0 1250.0,475.0 1252.0,477.0 1254.0,477.0 1256.0,475.0 1258.0,477.0 1260.0,475.0 1262.0,475.0 1264.0,475.0 1266.0,477.0 1268.0,475.0 1270.0,475.0 1272.0,475.0 1274.0,477.0 1276.0,477.0 1278.0,475.0 1280.0,475.0 1282.0,473.0 1284.0,475.0 1286.0,475.0 1288.0,475.0 1290.0,477.0 1292.0,477.0 1294.0,475.0 1296.0,475.0 1298.0,475.0 1300.0,475.0 1302.0,475.0 1304.0,473.0 1306.0,477.0 1308.0,475.0 1310.0,477.0 1312.0,477.0 1314.0,475.0 1316.0,475.0 1318.0,475.0 1320.0,475.0 1322.0,475.0 1324.0,475.0 1326.0,475.0 1328.0,475.0 1330.0,475.0 1332.0,473.0 1334.0,473.0 1336.0,473.0 1338.0,475.0 1340.0,473.0 1342.0,475.0 1344.0,477.0 1346.0,475.0 1348.0,473.0"/><polyline stroke="#e9e964" points="208.0,610.0 211.0,566.0 213.0,538.0 215.0,500.0 217.0,457.0 219.0,418.0 221.0,385.0 223.0,352.0 225.0,324.0 227.0,317.0 229.0,302.0 231.0,294.0 234.0,289.0 237.0,282.0 241.0,275.0 244.0,275.0 246.0,273.0 248.0,265.0 250.0,261.0 252.0,261.0 254.0,257.0 256.0,257.0 258.0,257.0 260.0,255.0 262.0,253.0 264.0,251.0 266.0,249.0 268.0,245.0 270.0,247.0 272.0,251.0 274.0,255.0 276.0,253.0 278.0,251.0 280.0,249.0 282.0,249.0 284.0,249.0 286.0,249.0 288.0,251.0 290.0,247.0 292.0,245.0 294.0,249.0 296.0,253.0 298.0,255.0 300.0,255.0 302.0,259.0 304.0,257.0 306.0,255.0 308.0,261.0 310.0,265.0 312.0,265.0 314.0,267.0 316.0,265.0 318.0,269.0 320.0,275.0 322.0,277.0 324.0,281.0 326.0,289.0 328.0,295.0 330.0,299.0 332.0,297.0 334.0,291.0 336.0,281.0 338.0,271.0 340.0,255.0 342.0,237.0 344.0,217.0 346.0,199.0 348.0,181.0 350.0,163.0 352.0,145.0 354.0,131.0 356.0,121.0 358.0,119.0 360.0,125.0 362.0,133.0 364.0,141.0 366.0,147.0 368.0,159.0 370.0,177.0 372.0,193.0 374.0,211.0 376.0,233.0 378.0,249.0 380.0,261.0 382.0,279.0 384.0,287.0 386.0,293.0 388.0,301.0 390.0,309.0 392.0,313.0 394.0,313.0 396.0,311.0 398.0,311.0 400.0,311.0 402.0,309.0 404.0,305.0 406.0,299.0 408.0,295.0 410.0,297.0 412.0,297.0 414.0,293.0 416.0,291.0 418.0,289.0 420.0,287.0 422.0,285.0 424.0,283.0 426.0,279.0 428.0,275.0 430.0,275.0 432.0,269.0 434.0,265.0 436.0,267.0 438.0,263.0 440.0,261.0 442.0,261.0 444.0,259.0 446.0,259.0 448.0,257.0 450.0,257.0 452.0,257.0 454.0,253.0 456.0,249.0 458.0,253.0 460.0,253.0 462.0,247.0 464.0,247.0 466.0,247.0 468.0,245.0 470.0,243.0 472.0,241.0 474.0,243.0 476.0,239.0 478.0,243.0 480.0,245.0 482.0,237.0 484.0,235.0 486.0,245.0 488.0,251.0 490.0,241.0 492.0,239.0 494.0,243.0 496.0,239.0 498.0,239.0 500.0,239.0 502.0,241.0 504.0,237.0 506.0,239.0 508.0,239.0 510.0,237.0 512.0,237.0 514.0,235.0 516.0,239.0 518.0,235.0 520.0,235.0 522.0,241.0 524.0,237.0 526.0,235.0 528.0,237.0 530.0,233.0 532.0,233.0 534.0,235.0 536.0,235.0 538.0,231.0 540.0,235.0 542.0,233.0 544.0,229.0 546.0,229.0 548.0,231.0 550.0,237.0 552.0,229.0 554.0,231.0 556.0,225.0 558.0,231.0 560.0,233.0 562.0,231.0 564.0,229.0 566.0,233.0 568.0,233.0 570.0,233.0 572.0,237.0 574.0,229.0 576.0,231.0 578.0,233.0 580.0,233.0 582.0,233.0 584.0,235.0 586.0,235.0 588.0,229.0 590.0,237.0 592.0,233.0 594.0,231.0 596.0,237.0 598.0,239.0 600.0,237.0 602.0,237.0 604.0,235.0 606.0,245.0 608.0,239.0 610.0,235.0 612.0,237.0 614.0,239.0 616.0,235.0 618.0,241.0 620.0,239.0 622.0,243.0 624.0,243.0 626.0,235.0 628.0,243.0 630.0,239.0 632.0,247.0 634.0,245.0 636.0,245.0 638.0,241.0 640.0,249.0 642.0,251.0 644.0,243.0 646.0,247.0 648.0,245.0 650.0,247.0 652.0,245.0 654.0,253.0 656.0,247.0 658.0,249.0 660.0,251.0 662.0,247.0 664.0,249.0 666.0,247.0 668.0,249.0 670.0,245.0 672.0,247.0 674.0,249.0 676.0,249.0 678.0,249.0 680.0,249.0 682.0,251.0 684.0,249.0 686.0,249.0 688.0,247.0 690.0,247.0 692.0,245.0 694.0,251.0 696.0,245.0 698.0,247.0 700.0,249.0 702.0,251.0 704.0,247.0 706.0,243.0 708.0,251.0 710.0,249.0 712.0,245.0 714.0,251.0 716.0,247.0 718.0,245.0 720.0,249.0 722.0,247.0 724.0,249.0 726.0,243.0 728.0,253.0 730.0,245.0 732.0,243.0 734.0,249.0 736.0,245.0 738.0,247.0 740.0,245.0 742.0,245.0 744.0,245.0 746.0,243.0 748.0,247.0 750.0,245.0 752.0,239.0 754.0,243.0 756.0,245.0 758.0,243.0 760.0,241.0 762.0,245.0 764.0,239.0 766.0,241.0 768.0,243.0 770.0,241.0 772.0,243.0 774.0,243.0 776.0,247.0 778.0,241.0 780.0,243.0 782.0,245.0 784.0,239.0 786.0,253.0 788.0,243.0 790.0,243.0 792.0,247.0 794.0,245.0 796.0,241.0 798.0,247.0 800.0,249.0 802.0,245.0 804.0,245.0 806.0,247.0 808.0,243.0 810.0,247.0 812.0,247.0 814.0,245.0 816.0,243.0 818.0,247.0 820.0,245.0 822.0,249.0 824.0,247.0 826.0,249.0 828.0,247.0 830.0,247.0 832.0,245.0 834.0,249.0 836.0,251.0 838.0,247.0 840.0,245.0 842.0,247.0 844.0,245.0 846.0,245.0 848.0,247.0 850.0,247.0 852.0,251.0 854.0,247.0 856.0,247.0 858.0,249.0 860.0,247.0 862.0,251.0 864.0,245.0 866.0,245.0 868.0,247.0 870.0,247.0 872.0,243.0 874.0,247.0 876.0,243.0 878.0,251.0 880.0,247.0 882.0,245.0 884.0,245.0 886.0,251.0 888.0,239.0 890.0,245.0 892.0,245.0 894.0,247.0 896.0,245.0 898.0,249.0 900.0,251.0 902.0,247.0 904.0,249.0 906.0,243.0 908.0,249.0 910.0,247.0 912.0,249.0 914.0,251.0 916.0,241.0 918.0,247.0 920.0,243.0 922.0,249.0 924.0,243.0 926.0,245.0 928.0,247.0 930.0,247.0 932.0,247.0 934.0,245.0 936.0,245.0 938.0,249.0 940.0,249.0 942.0,241.0 944.0,249.0 946.0,247.0 948.0,249.0 950.0,245.0 952.0,249.0 954.0,243.0 956.0,247.0 958.0,237.0 960.0,247.0 962.0,249.0 964.0,243.0 966.0,249.0 968.0,245.0 970.0,249.0 972.0,247.0 974.0,241.0 976.0,247.0 978.0,251.0 980.0,251.0 982.0,241.0 984.0,243.0 986.0,249.0 988.0,241.0 990.0,241.0 992.0,247.0 994.0,247.0 996.0,247.0 998.0,247.0 1000.0,245.0 1002.0,249.0 1004.0,245.0 1006.0,247.0 1008.0,243.0 1010.0,245.0 1012.0,245.0 1014.0,257.0 1016.0,247.0 1018.0,243.0 1020.0,241.0 1022.0,247.0 1024.0,245.0 1026.0,245.0 1028.0,245.0 1030.0,241.0 1032.0,245.0 1034.0,245.0 1036.0,243.0 1038.0,247.0 1040.0,241.0 1042.0,243.0 1044.0,243.0 1046.0,249.0 1048.0,241.0 1050.0,245.0 1052.0,247.0 1054.0,243.0 1056.0,247.0 1058.0,235.0 1060.0,237.0 1062.0,247.0 1064.0,241.0 1066.0,243.0 1068.0,241.0 1070.0,247.0 1072.0,247.0 1074.0,241.0 1076.0,247.0 1078.0,245.0 1080.0,253.0 1082.0,243.0 1084.0,243.0 1086.0,245.0 1088.0,245.0 1090.0,243.0 1092.0,247.0 1094.0,241.0 1096.0,245.0 1098.0,245.0 1100.0,247.0 1102.0,241.0 1104.0,247.0 1106.0,243.0 1108.0,243.0 1110.0,241.0 1112.0,245.0 1114.0,243.0 1116.0,241.0 1118.0,241.0 1120.0,243.0 1122.0,243.0 1124.0,247.0 1126.0,249.0 1128.0,247.0 1130.0,245.0 1132.0,243.0 1134.0,245.0 1136.0,247.0 1138.0,251.0 1140.0,245.0 1142.0,245.0 1144.0,245.0 1146.0,245.0 1148.0,245.0 1150.0,245.0 1152.0,247.0 1154.0,251.0 1156.0,247.0 1158.0,251.0 1160.0,251.0 1162.0,247.0 1164.0,251.0 1166.0,249.0 1168.0,247.0 1170.0,249.0 1172.0,249.0 1174.0,247.0 1176.0,247.0 1178.0,251.0 1180.0,249.0 1182.0,247.0 1184.0,249.0 1186.0,245.0 1188.0,251.0 1190.0,251.0 1192.0,251.0 1194.0,251.0 1196.0,251.0 1198.0,249.0 1200.0,249.0 1202.0,251.0 1204.0,253.0 1206.0,251.0 1208.0,257.0 1210.0,251.0 1212.0,253.0 1214.0,255.0 1216.0,251.0 1218.0,249.0 1220.0,247.0 1222.0,251.0 1224.0,253.0 1226.0,251.0 1228.0,251.0 1230.0,249.0 1232.0,251.0 1234.0,243.0 1236.0,251.0 1238.0,249.0 1240.0,245.0 1242.0,255.0 1244.0,245.0 1246.0,247.0 1248.0,245.0 1250.0,251.0 1252.0,247.0 1254.0,251.0 1256.0,249.0 1258.0,249.0 1260.0,243.0 1262.0,245.0 1264.0,251.0 1266.0,245.0 1268.0,243.0 1270.0,245.0 1272.0,247.0 1274.0,245.0 1276.0,245.0 1278.0,241.0 1280.0,245.0 1282.0,245.0 1284.0,237.0 1286.0,245.0 1288.0,247.0 1290.0,239.0 1292.0,241.0 1294.0,243.0 1296.0,235.0 1298.0,233.0 1300.0,235.0 1302.0,237.0 1304.0,235.0 1306.0,239.0 1308.0,237.0 1310.0,233.0 1312.0,237.0 1314.0,239.0 1316.0,237.0 1318.0,237.0 1320.0,233.0 1322.0,235.0 1324.0,229.0 1326.0,233.0 1328.0,231.0 1330.0,235.0 1332.0,233.0 1334.0,233.0 1336.0,231.0 1338.0,235.0 1340.0,229.0 1342.0,231.0 1344.0,229.0 1346.0,227.0 1348.0,235.0"/></g><g stroke="#d8382e" stroke-width="2" shape-rendering="crispEdges"><line x1="327" y1="260" x2="327" y2="332"/><line x1="338" y1="113" x2="378" y2="113"/><line x1="374" y1="315" x2="414" y2="315"/><line x1="327" y1="472" x2="327" y2="544"/><line x1="338" y1="347" x2="378" y2="347"/><line x1="378" y1="525" x2="418" y2="525"/><line x1="325" y1="708" x2="325" y2="780"/><line x1="338" y1="595" x2="378" y2="595"/><line x1="382" y1="763" x2="422" y2="763"/><line x1="321" y1="944" x2="321" y2="1016"/><line x1="336" y1="827" x2="376" y2="827"/><line x1="382" y1="1001" x2="422" y2="1001"/></g><g stroke="#e9e964" stroke-width="2" shape-rendering="crispEdges"><line x1="463" y1="224" x2="463" y2="264"/><line x1="465" y1="452" x2="465" y2="492"/><line x1="471" y1="694" x2="471" y2="734"/><line x1="489" y1="930" x2="489" y2="970"/></g><g font-family="Liberation Sans, sans-serif" fill="#e9e964"><g font-size="40" letter-spacing="0.7" stroke="#e9e964" stroke-width="0.7"><text x="289" y="119">20uV/D</text><text x="729" y="119">5.0mA</text><text x="729" y="169">0.2ms</text><text x="729" y="219">2Hz</text><text x="1109" y="119">2ms/D</text></g><g font-size="34" letter-spacing="-1"><text x="1190" y="392">5.0mA</text><text x="1189" y="442">20/20</text><text x="1318" y="432">A</text></g></g><g font-family="Liberation Sans, sans-serif" fill="#68c6d0" font-size="34" letter-spacing="-1"><text x="1190" y="628">5.0mA</text><text x="1190" y="678">117/20</text><text x="1320" y="668">B</text><text x="1190" y="869">8.0mA</text><text x="1190" y="919">105/20</text><text x="1320" y="909">C</text><text x="1190" y="1105">8.0mA</text><text x="1190" y="1155">73/20</text><text x="1320" y="1145">D</text></g></svg>
<div class="abs t32" style="left:1409px;top:155px">ULNAR</div>
<div class="abs" style="left:1432px;top:324px;width:210px;height:60px;border:2px solid #fff"><div style="width:100%;height:100%;border:2px solid #2b6ab7;text-align:center;font-size:33px;letter-spacing:-0.4px;line-height:53px;color:#a9b0b9;text-shadow:1.5px 1.5px 0 #fff;-webkit-text-stroke:0">Cache</div></div>
<svg class="abs" style="left:1452px;top:392px" width="178" height="42" shape-rendering="crispEdges"><rect width="178" height="42" fill="#fff"/><rect width="176" height="40" fill="#8e96a0"/><rect x="2" y="2" width="174" height="38" fill="#dcdfe2"/><rect x="2" y="2" width="172" height="36" fill="#606872"/><rect x="4" y="4" width="170" height="34" fill="#fff"/><rect x="140" y="4" width="34" height="34" fill="#6a6e72"/><rect x="140" y="4" width="32" height="32" fill="#dcdcdc"/><rect x="142" y="6" width="30" height="30" fill="#a0a0a0"/><rect x="142" y="6" width="28" height="28" fill="#fff"/><rect x="144" y="8" width="26" height="26" fill="#ebebeb"/><rect x="150" y="18" width="14" height="2" fill="#000"/><rect x="152" y="20" width="10" height="2" fill="#000"/><rect x="154" y="22" width="6" height="2" fill="#000"/><rect x="156" y="24" width="2" height="2" fill="#000"/></svg>
<div class="abs" style="left:1438px;top:624px;width:206px;height:68px;background:linear-gradient(to bottom,#dde3f3 0,#dde3f3 2px,transparent 2px,transparent 66px,#fff 66px)"></div>
<div class="abs xb" style="left:1440px;top:626px;width:100px;height:64px"></div>
<div class="abs" style="left:1440px;top:626px;width:2px;height:2px;background:#fff"></div>
<div class="abs" style="left:1538px;top:626px;width:2px;height:2px;background:#fff"></div>
<div class="abs" style="left:1440px;top:688px;width:2px;height:2px;background:#fff"></div>
<div class="abs" style="left:1538px;top:688px;width:2px;height:2px;background:#fff"></div>
<svg class="abs" style="left:0;top:0;overflow:visible" width="1" height="1"><path d="M1470 658 l10 -12 h7 l-8 8 h33 v8 h-33 l8 8 h-7 z" fill="#0a0a0a"/></svg>
<div class="abs xb" style="left:1542px;top:626px;width:100px;height:64px"></div>
<div class="abs" style="left:1542px;top:626px;width:2px;height:2px;background:#fff"></div>
<div class="abs" style="left:1640px;top:626px;width:2px;height:2px;background:#fff"></div>
<div class="abs" style="left:1542px;top:688px;width:2px;height:2px;background:#fff"></div>
<div class="abs" style="left:1640px;top:688px;width:2px;height:2px;background:#fff"></div>
<svg class="abs" style="left:0;top:0;overflow:visible" width="1" height="1"><path d="M1616 658 l-10 -12 h-7 l8 8 h-33 v8 h33 l-8 8 h7 z" fill="#0a0a0a"/></svg>
<div class="abs" style="left:1438px;top:1102px;width:206px;height:68px;background:linear-gradient(to bottom,#dde3f3 0,#dde3f3 2px,transparent 2px,transparent 66px,#fff 66px)"></div>
<div class="abs xb" style="left:1440px;top:1104px;width:100px;height:64px"></div>
<div class="abs" style="left:1440px;top:1104px;width:2px;height:2px;background:#fff"></div>
<div class="abs" style="left:1538px;top:1104px;width:2px;height:2px;background:#fff"></div>
<div class="abs" style="left:1440px;top:1166px;width:2px;height:2px;background:#fff"></div>
<div class="abs" style="left:1538px;top:1166px;width:2px;height:2px;background:#fff"></div>
<svg class="abs" style="left:0;top:0;overflow:visible" width="1" height="1"><path d="M1492 1116 l12 10 v5 l-8 -6 v33 h-8 v-33 l-8 6 v-5 z" fill="#0a0a0a"/></svg>
<div class="abs xb" style="left:1542px;top:1104px;width:100px;height:64px"></div>
<div class="abs" style="left:1542px;top:1104px;width:2px;height:2px;background:#fff"></div>
<div class="abs" style="left:1640px;top:1104px;width:2px;height:2px;background:#fff"></div>
<div class="abs" style="left:1542px;top:1166px;width:2px;height:2px;background:#fff"></div>
<div class="abs" style="left:1640px;top:1166px;width:2px;height:2px;background:#fff"></div>
<svg class="abs" style="left:0;top:0;overflow:visible" width="1" height="1"><path d="M1594 1158 l12 -10 v-5 l-8 6 v-33 h-8 v33 l-8 -6 v5 z" fill="#0a0a0a"/></svg>
<svg class="abs" style="left:1500px;top:800px" width="84" height="210" viewBox="1500 800 84 210" shape-rendering="crispEdges">
<path d="M1540 804 L1510 832 V836 H1526 V882 H1540 Z" fill="#cdb8a5"/>
<path d="M1540 804 H1544 L1574 834 V838 H1554 V882 H1540 Z" fill="#080808"/>
<path d="M1540 866 L1554 878 V882 H1526 V878 Z" fill="#8a74a4"/>
<path d="M1540 1004 L1510 976 V972 H1526 V926 H1540 Z" fill="#cdb8a5"/>
<path d="M1540 1004 H1544 L1574 974 V970 H1554 V926 H1540 Z" fill="#080808"/>
<path d="M1540 942 L1554 930 V926 H1526 V930 Z" fill="#8a74a4"/>
</svg>
<div class="abs" style="left:1684px;top:64px;width:1374px;height:112px;border:2px solid #8a9097"></div>
<div class="abs" style="left:1686px;top:66px;width:1374px;height:112px;border:2px solid #fff"></div>
<svg class="abs" style="left:1700px;top:114px" width="28" height="28" viewBox="0 0 28 28"><circle cx="14" cy="14" r="10.5" fill="#fff" stroke="#7e848b" stroke-width="2.6"/><path d="M5 20.5 A 11 11 0 0 0 23 20.5 A11 11 0 0 0 23.5 8.5" fill="none" stroke="#f4f4f4" stroke-width="2.6"/><circle cx="14" cy="14" r="4" fill="#000"/></svg>
<div class="abs t32" style="left:1738px;top:108px">CH1</div>
<svg class="abs" style="left:2038px;top:114px" width="28" height="28" viewBox="0 0 28 28"><circle cx="14" cy="14" r="10.5" fill="#fff" stroke="#7e848b" stroke-width="2.6"/><path d="M5 20.5 A 11 11 0 0 0 23 20.5 A11 11 0 0 0 23.5 8.5" fill="none" stroke="#f4f4f4" stroke-width="2.6"/></svg>
<div class="abs t32" style="left:2076px;top:108px">CH2</div>
<svg class="abs" style="left:2376px;top:114px" width="28" height="28" viewBox="0 0 28 28"><circle cx="14" cy="14" r="10.5" fill="#fff" stroke="#7e848b" stroke-width="2.6"/><path d="M5 20.5 A 11 11 0 0 0 23 20.5 A11 11 0 0 0 23.5 8.5" fill="none" stroke="#f4f4f4" stroke-width="2.6"/></svg>
<div class="abs t32" style="left:2414px;top:108px">CH3</div>
<svg class="abs" style="left:2714px;top:114px" width="28" height="28" viewBox="0 0 28 28"><circle cx="14" cy="14" r="10.5" fill="#fff" stroke="#7e848b" stroke-width="2.6"/><path d="M5 20.5 A 11 11 0 0 0 23 20.5 A11 11 0 0 0 23.5 8.5" fill="none" stroke="#f4f4f4" stroke-width="2.6"/></svg>
<div class="abs t32" style="left:2752px;top:108px">CH4</div>
<div class="abs" style="left:1684px;top:178px;width:1366px;height:1534px;border:2px solid #5f656c"></div>
<div class="abs" style="left:1686px;top:280px;width:1362px;height:2px;background:#000"></div>
<div class="abs" style="left:1952px;top:180px;width:2px;height:100px;background:#000"></div>
<div class="abs vl" style="left:1952px;top:282px;height:1427px"></div>
<div class="abs" style="left:2076px;top:180px;width:2px;height:100px;background:#000"></div>
<div class="abs vl" style="left:2076px;top:282px;height:1427px"></div>
<div class="abs" style="left:2190px;top:180px;width:2px;height:100px;background:#000"></div>
<div class="abs vl" style="left:2190px;top:282px;height:1427px"></div>
<div class="abs" style="left:2358px;top:180px;width:2px;height:100px;background:#000"></div>
<div class="abs vl" style="left:2358px;top:282px;height:1427px"></div>
<div class="abs" style="left:2532px;top:180px;width:2px;height:100px;background:#000"></div>
<div class="abs vl" style="left:2532px;top:282px;height:1427px"></div>
<div class="abs" style="left:2688px;top:180px;width:2px;height:100px;background:#000"></div>
<div class="abs vl" style="left:2688px;top:282px;height:1427px"></div>
<div class="abs" style="left:2868px;top:180px;width:2px;height:100px;background:#000"></div>
<div class="abs vl" style="left:2868px;top:282px;height:1427px"></div>
<div class="abs hl" style="left:1686px;top:518px;width:1362px"></div>
<div class="abs hl" style="left:1686px;top:756px;width:1362px"></div>
<div class="abs hl" style="left:1686px;top:994px;width:1362px"></div>
<div class="abs hl" style="left:1686px;top:1232px;width:1362px"></div>
<div class="abs hl" style="left:1686px;top:1470px;width:1362px"></div>
<div class="abs hl" style="left:1686px;top:1708px;width:1362px"></div>
<div class="abs hd" style="left:1686px;top:211px;width:266px">Record</div>
<div class="abs hd" style="left:1954px;top:211px;width:122px">No.</div>
<div class="abs hd" style="left:2078px;top:191px;width:112px">Dstnc<br>mm</div>
<div class="abs hd" style="left:2192px;top:191px;width:166px">Speed<br>m/s</div>
<div class="abs hd" style="left:2360px;top:191px;width:172px">Lat<br>ms</div>
<div class="abs hd" style="left:2534px;top:191px;width:154px">Amp<br>uV</div>
<div class="abs hd" style="left:2690px;top:191px;width:178px">AmpRatio<br>%</div>
<div class="abs hd" style="left:2870px;top:191px;width:178px">Area<br>ms*uV</div>
<div class="abs hd" style="left:1686px;top:361px;width:266px">Little Fi<br>nger</div>
<svg class="abs" style="left:1970px;top:374px" width="98" height="48" shape-rendering="crispEdges"><rect width="98" height="48" fill="#fff"/><rect width="96" height="46" fill="#8e96a0"/><rect x="2" y="2" width="94" height="44" fill="#dcdfe2"/><rect x="2" y="2" width="92" height="42" fill="#606872"/><rect x="4" y="4" width="90" height="40" fill="#b9d3ec"/><rect x="60" y="4" width="34" height="40" fill="#6a6e72"/><rect x="60" y="4" width="32" height="38" fill="#dcdcdc"/><rect x="62" y="6" width="30" height="36" fill="#a0a0a0"/><rect x="62" y="6" width="28" height="34" fill="#fff"/><rect x="64" y="8" width="26" height="32" fill="#ebebeb"/><rect x="70" y="20" width="14" height="2" fill="#000"/><rect x="72" y="22" width="10" height="2" fill="#000"/><rect x="74" y="24" width="6" height="2" fill="#000"/><rect x="76" y="26" width="2" height="2" fill="#000"/><g fill="#050505"><rect x="14" y="16" width="2" height="16"/><rect x="12" y="22" width="6" height="4"/><rect x="8" y="20" width="4" height="2"/><rect x="18" y="20" width="4" height="2"/><rect x="8" y="26" width="4" height="2"/><rect x="18" y="26" width="4" height="2"/></g></svg>
<div class="abs edit" style="left:2092px;top:374px"></div>
<div class="abs" style="left:2092px;top:374px;width:49px;height:32px;background:#2a72c9;border-right:2px solid #d07030"></div>
<div class="abs nostroke" style="left:2094px;top:375px;font-size:30.5px;line-height:32px;color:#fff;letter-spacing:-0.2px;transform:scaleX(.9);transform-origin:0 0">100</div>
<div class="abs val" style="left:2192px;top:377px;width:166px;color:#2a5bb0">41.7</div>
<div class="abs val" style="left:2360px;top:377px;width:172px">2.4</div>
<div class="abs val" style="left:2534px;top:377px;width:154px">24.5</div>
<div class="abs val" style="left:2690px;top:377px;width:178px">100</div>
<div class="abs val" style="left:2870px;top:377px;width:178px">42.9</div>
<div class="abs hd" style="left:1686px;top:599px;width:266px">Little Fi<br>nger</div>
<svg class="abs" style="left:1970px;top:610px" width="98" height="48" shape-rendering="crispEdges"><rect width="98" height="48" fill="#fff"/><rect width="96" height="46" fill="#8e96a0"/><rect x="2" y="2" width="94" height="44" fill="#dcdfe2"/><rect x="2" y="2" width="92" height="42" fill="#606872"/><rect x="4" y="4" width="90" height="40" fill="#b9d3ec"/><rect x="60" y="4" width="34" height="40" fill="#6a6e72"/><rect x="60" y="4" width="32" height="38" fill="#dcdcdc"/><rect x="62" y="6" width="30" height="36" fill="#a0a0a0"/><rect x="62" y="6" width="28" height="34" fill="#fff"/><rect x="64" y="8" width="26" height="32" fill="#ebebeb"/><rect x="70" y="20" width="14" height="2" fill="#000"/><rect x="72" y="22" width="10" height="2" fill="#000"/><rect x="74" y="24" width="6" height="2" fill="#000"/><rect x="76" y="26" width="2" height="2" fill="#000"/><g fill="#050505"><rect x="14" y="16" width="2" height="16"/><rect x="12" y="22" width="6" height="4"/><rect x="8" y="20" width="4" height="2"/><rect x="18" y="20" width="4" height="2"/><rect x="8" y="26" width="4" height="2"/><rect x="18" y="26" width="4" height="2"/></g></svg>
<div class="abs edit" style="left:2092px;top:610px"></div>
<div class="abs val" style="left:2360px;top:615px;width:172px">2.4</div>
<div class="abs val" style="left:2534px;top:615px;width:154px">21.5</div>
<div class="abs val" style="left:2690px;top:615px;width:178px">100</div>
<div class="abs val" style="left:2870px;top:615px;width:178px">47.5</div>
<svg class="abs" style="left:1970px;top:852px" width="98" height="48" shape-rendering="crispEdges"><rect width="98" height="48" fill="#fff"/><rect width="96" height="46" fill="#8e96a0"/><rect x="2" y="2" width="94" height="44" fill="#dcdfe2"/><rect x="2" y="2" width="92" height="42" fill="#606872"/><rect x="4" y="4" width="90" height="40" fill="#b9d3ec"/><rect x="60" y="4" width="34" height="40" fill="#6a6e72"/><rect x="60" y="4" width="32" height="38" fill="#dcdcdc"/><rect x="62" y="6" width="30" height="36" fill="#a0a0a0"/><rect x="62" y="6" width="28" height="34" fill="#fff"/><rect x="64" y="8" width="26" height="32" fill="#ebebeb"/><rect x="70" y="20" width="14" height="2" fill="#000"/><rect x="72" y="22" width="10" height="2" fill="#000"/><rect x="74" y="24" width="6" height="2" fill="#000"/><rect x="76" y="26" width="2" height="2" fill="#000"/><g fill="#050505"><rect x="14" y="16" width="2" height="16"/><rect x="12" y="22" width="6" height="4"/><rect x="8" y="20" width="4" height="2"/><rect x="18" y="20" width="4" height="2"/><rect x="8" y="26" width="4" height="2"/><rect x="18" y="26" width="4" height="2"/></g></svg>
<div class="abs edit" style="left:2092px;top:852px"></div>
<div class="abs val" style="left:2360px;top:853px;width:172px">2.3</div>
<div class="abs val" style="left:2534px;top:853px;width:154px">20.4</div>
<div class="abs val" style="left:2690px;top:853px;width:178px">100</div>
<div class="abs val" style="left:2870px;top:853px;width:178px">49.9</div>
<svg class="abs" style="left:1970px;top:1088px" width="98" height="48" shape-rendering="crispEdges"><rect width="98" height="48" fill="#fff"/><rect width="96" height="46" fill="#8e96a0"/><rect x="2" y="2" width="94" height="44" fill="#dcdfe2"/><rect x="2" y="2" width="92" height="42" fill="#606872"/><rect x="4" y="4" width="90" height="40" fill="#b9d3ec"/><rect x="60" y="4" width="34" height="40" fill="#6a6e72"/><rect x="60" y="4" width="32" height="38" fill="#dcdcdc"/><rect x="62" y="6" width="30" height="36" fill="#a0a0a0"/><rect x="62" y="6" width="28" height="34" fill="#fff"/><rect x="64" y="8" width="26" height="32" fill="#ebebeb"/><rect x="70" y="20" width="14" height="2" fill="#000"/><rect x="72" y="22" width="10" height="2" fill="#000"/><rect x="74" y="24" width="6" height="2" fill="#000"/><rect x="76" y="26" width="2" height="2" fill="#000"/><g fill="#050505"><rect x="14" y="16" width="2" height="16"/><rect x="12" y="22" width="6" height="4"/><rect x="8" y="20" width="4" height="2"/><rect x="18" y="20" width="4" height="2"/><rect x="8" y="26" width="4" height="2"/><rect x="18" y="26" width="4" height="2"/></g></svg>
<div class="abs edit" style="left:2092px;top:1088px"></div>
<div class="abs nostroke" style="left:2094px;top:1089px;font-size:30.5px;line-height:32px;color:#111;letter-spacing:-0.2px;transform:scaleX(.9);transform-origin:0 0">100</div>
<div class="abs val" style="left:2192px;top:1091px;width:166px;color:#2a5bb0">43.5</div>
<div class="abs val" style="left:2360px;top:1091px;width:172px">2.3</div>
<div class="abs val" style="left:2534px;top:1091px;width:154px">21.0</div>
<div class="abs val" style="left:2690px;top:1091px;width:178px">100</div>
<div class="abs val" style="left:2870px;top:1091px;width:178px">57.0</div>
<svg class="abs" style="left:1970px;top:1330px" width="98" height="48" shape-rendering="crispEdges"><rect width="98" height="48" fill="#fff"/><rect width="96" height="46" fill="#8e96a0"/><rect x="2" y="2" width="94" height="44" fill="#dcdfe2"/><rect x="2" y="2" width="92" height="42" fill="#606872"/><rect x="4" y="4" width="90" height="40" fill="#b9d3ec"/><rect x="60" y="4" width="34" height="40" fill="#6a6e72"/><rect x="60" y="4" width="32" height="38" fill="#dcdcdc"/><rect x="62" y="6" width="30" height="36" fill="#a0a0a0"/><rect x="62" y="6" width="28" height="34" fill="#fff"/><rect x="64" y="8" width="26" height="32" fill="#ebebeb"/><rect x="72" y="22" width="14" height="2" fill="#fff"/><rect x="74" y="24" width="10" height="2" fill="#fff"/><rect x="76" y="26" width="6" height="2" fill="#fff"/><rect x="78" y="28" width="2" height="2" fill="#fff"/><rect x="70" y="20" width="14" height="2" fill="#8e8e8e"/><rect x="72" y="22" width="10" height="2" fill="#8e8e8e"/><rect x="74" y="24" width="6" height="2" fill="#8e8e8e"/><rect x="76" y="26" width="2" height="2" fill="#8e8e8e"/></svg>
<div class="abs edit" style="left:2092px;top:1330px"></div>
<svg class="abs" style="left:1970px;top:1564px" width="98" height="48" shape-rendering="crispEdges"><rect width="98" height="48" fill="#fff"/><rect width="96" height="46" fill="#8e96a0"/><rect x="2" y="2" width="94" height="44" fill="#dcdfe2"/><rect x="2" y="2" width="92" height="42" fill="#606872"/><rect x="4" y="4" width="90" height="40" fill="#b9d3ec"/><rect x="60" y="4" width="34" height="40" fill="#6a6e72"/><rect x="60" y="4" width="32" height="38" fill="#dcdcdc"/><rect x="62" y="6" width="30" height="36" fill="#a0a0a0"/><rect x="62" y="6" width="28" height="34" fill="#fff"/><rect x="64" y="8" width="26" height="32" fill="#ebebeb"/><rect x="72" y="22" width="14" height="2" fill="#fff"/><rect x="74" y="24" width="10" height="2" fill="#fff"/><rect x="76" y="26" width="6" height="2" fill="#fff"/><rect x="78" y="28" width="2" height="2" fill="#fff"/><rect x="70" y="20" width="14" height="2" fill="#8e8e8e"/><rect x="72" y="22" width="10" height="2" fill="#8e8e8e"/><rect x="74" y="24" width="6" height="2" fill="#8e8e8e"/><rect x="76" y="26" width="2" height="2" fill="#8e8e8e"/></svg>
<div class="abs edit" style="left:2092px;top:1564px"></div>
<div class="abs" style="left:2px;top:1720px;width:3060px;height:104px;background:#fff"></div>
<div class="abs" style="left:3062px;top:1720px;width:6px;height:2px;background:#fff"></div>
<div class="abs" style="left:3068px;top:1718px;width:3px;height:107px;background:#8a9098"></div>
<div class="abs" style="left:3062px;top:1821px;width:9px;height:4px;background:#8a9098"></div>
<div class="abs" style="left:0;top:1823.5px;width:3071px;height:2px;background:#8a8a8a"></div>
<div class="abs" style="left:0;top:1716px;width:2px;height:107px;background:#d4d6da"></div>
<div class="abs xb bb" style="left:6px;width:250px"><div class="l" style="top:8px">A</div><div class="l" style="top:48px">Right</div></div>
<div class="abs xb bb" style="left:261px;width:235px"><div class="l" style="top:8px">N</div><div class="l" style="top:48px">Select Nerve</div></div>
<div class="abs xb bb" style="left:501px;width:235px"><div class="l" style="top:8px">Space</div><div class="l" style="top:48px">Single</div></div>
<div class="abs xb bb" style="left:741px;width:235px"><div class="l" style="top:8px">F</div><div class="l" style="top:48px">Average</div></div>
<div class="abs xb bb" style="left:981px;width:235px"><div class="l" style="top:8px">K</div><div class="l" style="top:48px">W-Contrast</div></div>
<div class="abs xb bb" style="left:1221px;width:235px"><div class="l" style="top:8px">F12</div><div class="l" style="top:48px">Impedance</div></div>
<div class="abs xb bb" style="left:1865px;width:235px"><div class="l" style="top:29px">Exammed Item</div></div>
<div class="abs xb bb" style="left:2105px;width:235px"><div class="l" style="top:8px">Parameter</div><div class="l" style="top:48px">Setting</div></div>
<div class="abs xb bb" style="left:2345px;width:235px"><div class="l" style="top:8px">F11</div><div class="l" style="top:48px">Help</div></div>
<div class="abs xb bb" style="left:2585px;width:235px"><div class="l" style="top:8px">P</div><div class="l" style="top:48px">Print</div></div>
<div class="abs xb bb" style="left:2825px;width:235px"><div class="l" style="top:8px">Esc</div><div class="l" style="top:48px">Exit</div></div>
<div class="abs" style="left:1456px;top:1718px;width:406px;height:105px;background:#e9eef8"></div>
<div class="abs cb grn" style="left:1460px;top:1722px">EMG</div>
<div class="abs cb pur" style="left:1460px;top:1774px;color:#fff">RNS</div>
<div class="abs cb pur" style="left:1662px;top:1722px;color:#fff">MCV</div>
<div class="abs cb grn" style="left:1662px;top:1774px;font-family:'Liberation Serif',serif;font-weight:normal;-webkit-text-stroke:0.9px #000;font-size:32px;letter-spacing:-0.9px;line-height:42px">F-Wave</div>
</body></html>
